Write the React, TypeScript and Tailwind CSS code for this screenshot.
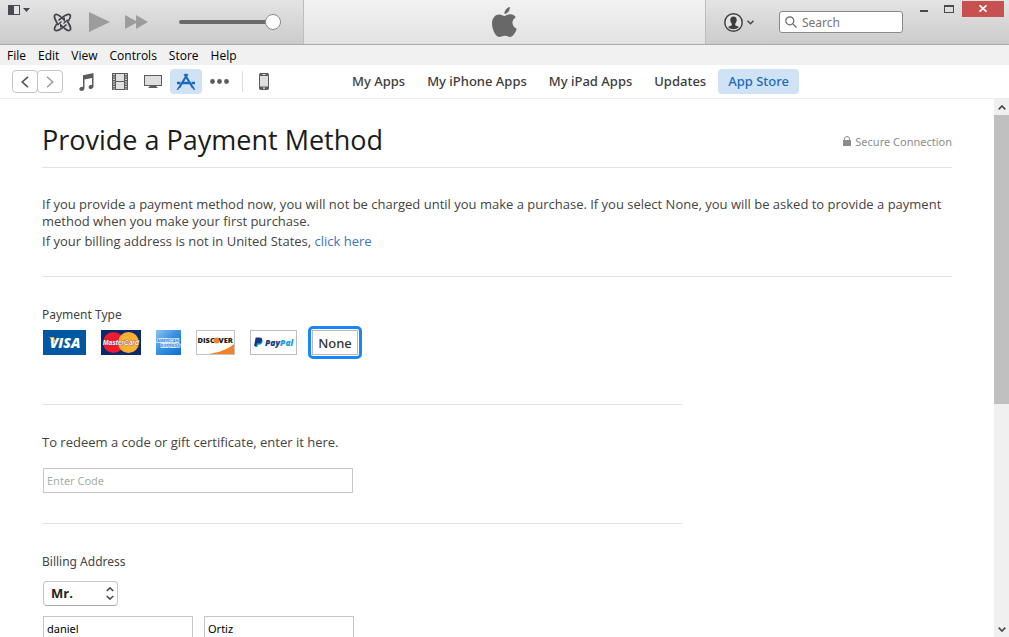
import { useState } from 'react';
import type { ReactNode } from 'react';

const MENU = ['File', 'Edit', 'View', 'Controls', 'Store', 'Help'];
const TABS = ['My Apps', 'My iPhone Apps', 'My iPad Apps', 'Updates', 'App Store'];

interface PaymentOption {
  id: string;
  name: string;
  logo: ReactNode;
}

const VisaLogo = () => (
  <svg width="43" height="25" viewBox="0 0 43 25">
    <rect width="43" height="25" fill="#0157a2" />
    <path d="M6 7h5l2 6z" fill="#f9a533" />
    <text x="22" y="18" textAnchor="middle" fontFamily="Open Sans, sans-serif" fontSize="14" fontWeight="800" fontStyle="italic" fill="#fff">VISA</text>
  </svg>
);

const MasterCardLogo = () => (
  <svg width="40" height="25" viewBox="0 0 40 25">
    <rect width="40" height="25" fill="#0a2a6e" />
    <circle cx="12.500" cy="12.500" r="10.500" fill="#ec1c2e" />
    <circle cx="27.500" cy="12.500" r="10.500" fill="#fbb034" />
    <text x="20" y="15" textAnchor="middle" fontFamily="Liberation Sans, sans-serif" fontSize="6.500" fontWeight="700" fontStyle="italic" fill="#fff" stroke="#7a2a3a" strokeWidth="0.600" paintOrder="stroke">MasterCard</text>
  </svg>
);

const AmexLogo = () => (
  <svg width="25" height="25" viewBox="0 0 25 25">
    <defs>
      <linearGradient id="amex" x1="0" y1="0" x2="1" y2="1">
        <stop offset="0" stopColor="#8cc4f3" />
        <stop offset="0.450" stopColor="#3b93e0" />
        <stop offset="1" stopColor="#0a70cf" />
      </linearGradient>
    </defs>
    <rect width="25" height="25" fill="url(#amex)" />
    <g fontFamily="Liberation Sans, sans-serif" fontSize="4" fontWeight="700" fill="#1f7fd4" stroke="#e8f3fd" strokeWidth="1.400" paintOrder="stroke">
      <text x="1" y="12">AMERICAN</text>
      <text x="5" y="17">EXPRESS</text>
    </g>
  </svg>
);

const DiscoverLogo = () => (
  <svg width="39" height="25" viewBox="0 0 39 25">
    <rect x="0.500" y="0.500" width="38" height="24" fill="#fff" stroke="#c4c4c4" />
    <path d="M38 14v10H13c10-1.500 18-4.500 25-10z" fill="#f58025" />
    <text x="1.500" y="13" fontFamily="Open Sans, sans-serif" fontSize="7.500" fontWeight="800" fill="#231f20">DISC</text>
    <circle cx="20.500" cy="10.500" r="3" fill="#f58025" />
    <text x="22.500" y="13" fontFamily="Open Sans, sans-serif" fontSize="7.500" fontWeight="800" fill="#231f20">VER</text>
  </svg>
);

const PayPalLogo = () => (
  <svg width="47" height="25" viewBox="0 0 47 25">
    <rect x="0.500" y="0.500" width="46" height="24" fill="#fff" stroke="#bdbdbd" />
    <path d="M7 9h3.500c2 0 2.500 1.300 2 3-.5 2-1.800 2.700-3.500 2.700H7.800L7.300 17H5z" fill="#009cde" />
    <path d="M5.700 7.500h4c2 0 2.700 1.300 2.200 3-.5 2-1.900 2.800-3.700 2.800H6.900L6.300 16H4z" fill="#153a80" />
    <text x="15" y="16" fontFamily="Open Sans, sans-serif" fontSize="8.500" fontWeight="800" fontStyle="italic" fill="#153a80">
      Pay<tspan fill="#1a9be0">Pal</tspan>
    </text>
  </svg>
);

const PAYMENT_OPTIONS: PaymentOption[] = [
  { id: 'visa', name: 'Visa', logo: <VisaLogo /> },
  { id: 'mastercard', name: 'MasterCard', logo: <MasterCardLogo /> },
  { id: 'amex', name: 'American Express', logo: <AmexLogo /> },
  { id: 'discover', name: 'Discover', logo: <DiscoverLogo /> },
  { id: 'paypal', name: 'PayPal', logo: <PayPalLogo /> },
  {
    id: 'none',
    name: 'None',
    logo: (
      <span className="flex h-[25px] w-[46px] items-center justify-center border border-[#b9b9b9] bg-white pt-px text-[13px] font-medium text-[#333]">
        None
      </span>
    ),
  },
];

function PlayerBar() {
  const [volume, setVolume] = useState(100);

  return (
    <header className="flex h-[45px] shrink-0 border-b border-[#a9a9a9] bg-gradient-to-b from-[#e4e4e4] to-[#cbcbcb]">
      <div className="flex w-[304px] shrink-0 border-r border-[#bdbdbd] pl-2">
        <button aria-label="Window menu" className="flex h-5 items-center gap-[3px]">
          <svg width="12" height="10" viewBox="0 0 12 10">
            <rect x="0.500" y="0.500" width="11" height="9" fill="#e4e4e4" stroke="#4a4852" />
            <rect width="6" height="10" fill="#4a4852" />
          </svg>
          <svg width="7" height="4" viewBox="0 0 7 4"><path d="M0 0h7L3.500 4z" fill="#4a4852" /></svg>
        </button>
        <div className="flex flex-1 items-center pl-[23px]">
          <button aria-label="Genius">
            <svg width="19" height="19" viewBox="0 0 19 19" fill="none" stroke="#45434d" strokeWidth="1.700">
              <path d="M5.500 12C2.500 8 .8 3.500 1.800 2 3 .8 6 2.300 8 4" />
              <path d="M13.500 7c3 4 4.700 8.500 3.700 10-1.200 1.200-4.200-.3-6.200-2" />
              <path d="M5.500 7.500C9.500 3.300 15.500.3 17 1.800c1.200 1.300-.2 4-1.700 6.200" />
              <path d="M13.500 11.500c-4 4.200-10 7.200-11.500 5.700-1.200-1.300.2-4 1.700-6.200" />
              <path d="M8.500 8.500L4.500 12M10.500 10.500L14.500 7" strokeWidth="1.200" />
              <path d="M7.500 4.500h4.500V9zM7 10v4.500h4.500z" fill="#45434d" stroke="none" />
            </svg>
          </button>
          <button aria-label="Play" className="ml-[17px]">
            <svg width="21" height="20" viewBox="0 0 21 20"><path d="M0 0l21 10L0 20z" fill="#9c9c9c" /></svg>
          </button>
          <button aria-label="Next track" className="ml-[15px]">
            <svg width="23" height="14" viewBox="0 0 23 14"><path d="M0 0l11 6V0l12 7-12 7V8L0 14z" fill="#9c9c9c" /></svg>
          </button>
          <input
            type="range"
            aria-label="Volume"
            value={volume}
            onChange={(e) => setVolume(Number(e.target.value))}
            className="ml-[31px] h-4 w-[102px] appearance-none bg-transparent [&::-webkit-slider-runnable-track]:h-1 [&::-webkit-slider-runnable-track]:rounded-full [&::-webkit-slider-runnable-track]:bg-[#6a6a6a] [&::-webkit-slider-thumb]:-mt-[6px] [&::-webkit-slider-thumb]:size-4 [&::-webkit-slider-thumb]:appearance-none [&::-webkit-slider-thumb]:rounded-full [&::-webkit-slider-thumb]:border [&::-webkit-slider-thumb]:border-[#8c8c8c] [&::-webkit-slider-thumb]:bg-white"
          />
        </div>
      </div>

      <div className="flex flex-1 items-center justify-center bg-gradient-to-b from-[#f2f2f2] to-[#e2e2e2]">
        <svg width="25" height="31" viewBox="0 0 25 31" fill="#686868">
          <path d="M17.800 0c.5 2.500-1.600 6.700-5.300 6.900C12 4 14.700.500 17.800 0z" />
          <path d="M12.600 8.900c1.400 0 3.100-1.600 5.800-1.600 2.200 0 4.200 1.200 5.400 3-5 3-4.100 9.600 1 11.500-1.100 3.200-3.800 8.200-6.700 8.200-2 0-2.900-1.200-5.200-1.200s-3.300 1.200-5.200 1.200C3.900 30 0 22.800 0 16.400 0 10.800 3.400 7.400 7.200 7.400c2.300 0 3.900 1.500 5.400 1.500z" />
        </svg>
      </div>

      <div className="flex w-[304px] shrink-0 border-l border-[#bdbdbd]">
        <div className="flex flex-1 items-center pl-[18px]">
          <button aria-label="Account" className="flex items-center gap-1">
            <svg width="19" height="19" viewBox="0 0 19 19">
              <circle cx="9.500" cy="9.500" r="8.700" fill="#e4e4e4" stroke="#3c3c3c" strokeWidth="1.400" />
              <path d="M9.500 3.500c2.200 0 3.300 1.500 3.200 3.500-.1 1.700-.8 3-1.500 3.800v1.400l3.900 1.800A8 8 0 0 1 3.900 14l3.900-1.800v-1.400C7 10 6.400 8.700 6.300 7c-.1-2 1-3.500 3.200-3.500z" fill="#3c3c3c" />
            </svg>
            <svg width="7" height="5" viewBox="0 0 7 5" fill="none" stroke="#4a4a4a" strokeWidth="1.600"><path d="M.5.700l3 3 3-3" /></svg>
          </button>
          <label className="ml-[25px] flex h-[22px] w-[124px] items-center gap-[5px] rounded-[3px] border border-[#8a8a8a] bg-white pl-[5px]">
            <svg width="12" height="12" viewBox="0 0 12 12" fill="none" stroke="#6a6a6a" strokeWidth="1.200" className="shrink-0">
              <circle cx="4.800" cy="4.800" r="4" />
              <path d="M7.800 7.800l3.700 3.700" />
            </svg>
            <input
              type="text"
              aria-label="Search"
              placeholder="Search"
              className="w-full min-w-0 text-[12px] outline-none placeholder:text-[#767676]"
            />
          </label>
        </div>
        <div className="flex h-4 items-center pr-[5px] pt-px">
          <button aria-label="Minimize" className="mr-4 mt-1 h-[2px] w-2 bg-[#4a4a4a]" />
          <button aria-label="Maximize" className="mr-2 h-2 w-[10px] border border-t-2 border-[#4a4a4a]" />
          <button aria-label="Close" className="flex h-4 w-[42px] items-center justify-center bg-[#c75050]">
            <svg width="8" height="7" viewBox="0 0 8 7" stroke="#fff" strokeWidth="1.700"><path d="M.5.300l7 6.400M7.500.300l-7 6.400" /></svg>
          </button>
        </div>
      </div>
    </header>
  );
}

function Toolbar() {
  const [tab, setTab] = useState('App Store');

  return (
    <div className="flex h-[34px] shrink-0 items-center border-b border-[#ebebeb] bg-white pl-3">
      <div className="flex w-[330px] shrink-0 items-center">
        <button aria-label="Back" className="flex h-[23px] w-[26px] items-center justify-center rounded-[4px] border border-[#c6c6c6]">
          <svg width="8" height="12" viewBox="0 0 8 12" fill="none" stroke="#555" strokeWidth="1.600"><path d="M7 .800L1.200 6 7 11.200" /></svg>
        </button>
        <button aria-label="Forward" className="-ml-px flex h-[23px] w-[26px] items-center justify-center rounded-[4px] border border-[#c6c6c6]">
          <svg width="8" height="12" viewBox="0 0 8 12" fill="none" stroke="#999" strokeWidth="1.400"><path d="M1 .800L6.800 6 1 11.200" /></svg>
        </button>
        <button aria-label="Music" className="ml-4">
          <svg width="15" height="18" viewBox="0 0 15 18" fill="#5c5c5c">
            <path d="M4 2.200L14.500 0v13.500c0 1.500-1.300 2.500-2.800 2.500-2.700 0-2.700-3.500-.2-4l1.500-.3V5L5.500 6.500V15c0 1.800-1.300 3-2.900 3C-.4 18-.4 14.500 2.300 14l1.700-.3z" />
          </svg>
        </button>
        <button aria-label="Movies" className="ml-[18px]">
          <svg width="16" height="17" viewBox="0 0 16 17">
            <rect width="16" height="17" fill="#5c5c5c" />
            <path d="M4 1h8v7H4zM4 9h8v7H4z" fill="#e0e0e0" />
            <path d="M2 1v16M14 1v16" stroke="#e8e8e8" strokeWidth="1.500" strokeDasharray="1.200 1.200" />
          </svg>
        </button>
        <button aria-label="TV Shows" className="ml-4">
          <svg width="18" height="13" viewBox="0 0 18 13">
            <rect x="0.500" y="0.500" width="17" height="10" fill="#dedede" stroke="#5c5c5c" />
            <path d="M6 11h6l2 2H4z" fill="#5c5c5c" />
          </svg>
        </button>
        <button aria-label="Apps" className="ml-2 flex h-[25px] w-8 items-center justify-center rounded-[4px] bg-[#d0e2f6]">
          <svg width="20" height="18" viewBox="0 0 20 18" fill="none" stroke="#1b6cb8">
            <path d="M8.500 1l8.500 14M11.500 1L3 15" strokeWidth="2.200" />
            <path d="M1 10h3.500M7 10h6.500M15.500 10H19" strokeWidth="2.600" />
            <path d="M3 14l-1.700 3M17 14l1.500 3" strokeWidth="1.500" />
          </svg>
        </button>
        <button aria-label="More" className="ml-2">
          <svg width="19" height="5" viewBox="0 0 19 5" fill="#5c5c5c">
            <circle cx="2.500" cy="2.500" r="2.400" />
            <circle cx="9.500" cy="2.500" r="2.400" />
            <circle cx="16.500" cy="2.500" r="2.400" />
          </svg>
        </button>
        <span className="ml-[13px] h-[21px] w-px bg-[#dcdcdc]" />
        <button aria-label="iPhone" className="ml-4">
          <svg width="10" height="17" viewBox="0 0 10 17">
            <rect width="10" height="17" rx="1.800" fill="#5c5c5c" />
            <rect x="1" y="3" width="8" height="10.500" fill="#dedede" />
            <path d="M3.500 1.500h3" stroke="#dedede" />
            <circle cx="5" cy="15.200" r="0.900" fill="#dedede" />
          </svg>
        </button>
      </div>
      <nav className="flex gap-[2px]">
        {TABS.map((name) => (
          <button
            key={name}
            onClick={() => setTab(name)}
            className={`h-[25px] whitespace-nowrap rounded-[4px] px-[10px] text-[13px] font-medium ${
              tab === name ? 'bg-[#d0e2f6] text-[#1b6cb8]' : 'text-[#3c3c3c]'
            }`}
          >
            {name}
          </button>
        ))}
      </nav>
    </div>
  );
}

function Scrollbar() {
  return (
    <div className="flex w-[15px] shrink-0 flex-col bg-[#f0f0f0]">
      <button aria-label="Scroll up" className="flex h-4 shrink-0 items-center justify-center">
        <svg width="8" height="5" viewBox="0 0 8 5" fill="none" stroke="#4a4a4a" strokeWidth="1.700"><path d="M.7 4.300L4 1l3.300 3.300" /></svg>
      </button>
      <div className="flex-1">
        <div className="h-4/7 bg-[#c0c0c0]" />
      </div>
      <button aria-label="Scroll down" className="flex h-4 shrink-0 items-center justify-center">
        <svg width="8" height="5" viewBox="0 0 8 5" fill="none" stroke="#4a4a4a" strokeWidth="1.700"><path d="M.7.700L4 4 7.300.700" /></svg>
      </button>
    </div>
  );
}

export default function App() {
  const [payment, setPayment] = useState('none');

  return (
    <div className="flex h-screen flex-col overflow-hidden bg-white font-['Noto_Sans',sans-serif] text-[12px] leading-[17px] text-[#444]">
      <PlayerBar />

      <nav className="flex h-5 shrink-0 items-center gap-3 bg-[#f1f1f1] pl-[7px] font-['Open_Sans',sans-serif] text-black">
        {MENU.map((item) => (
          <button key={item}>{item}</button>
        ))}
      </nav>

      <Toolbar />

      <div className="flex min-h-0 flex-1">
        <main className="min-w-0 flex-1 overflow-hidden px-[42px] pt-6">
          <div className="flex items-center justify-between border-b border-[#e3e3e3] pb-2">
            <h1 className="pb-[2px] font-['Open_Sans',sans-serif] text-[27px] leading-[34px] text-[#1c1c1c]">Provide a Payment Method</h1>
            <div className="flex items-center gap-1 text-[11px] text-[#8c8c8c]">
              <svg width="8" height="10" viewBox="0 0 8 10">
                <rect y="4" width="8" height="6" fill="#8c8c8c" />
                <path d="M1.500 4.500V3a2.500 2.500 0 0 1 5 0v1.500" fill="none" stroke="#8c8c8c" />
              </svg>
              Secure Connection
            </div>
          </div>

          <section className="border-b border-[#e3e3e3] pb-[26px] pt-7 font-['Open_Sans',sans-serif] text-[13px]">
            <p>
              If you provide a payment method now, you will not be charged until you make a purchase. If you select None, you will be asked to provide a payment method when you make your first purchase.
            </p>
            <p className="mt-[3px]">
              If your billing address is not in United States, <a href="#" className="text-[#3f73b8]">click here</a>
            </p>
          </section>

          <fieldset className="max-w-[640px] border-b border-[#e3e3e3] pb-[49px]">
            <legend className="pt-[29px]">Payment Type</legend>
            <div className="mt-[7px] flex gap-[15px] pl-px">
              {PAYMENT_OPTIONS.map((option) => (
                <label
                  key={option.id}
                  className={`relative ${payment === option.id ? 'rounded-[1px] outline-[3px] outline-offset-1 outline-[#1a86fc]' : ''}`}
                >
                  <input
                    type="radio"
                    name="payment"
                    aria-label={option.name}
                    checked={payment === option.id}
                    onChange={() => setPayment(option.id)}
                    className="sr-only"
                  />
                  {option.logo}
                </label>
              ))}
            </div>
          </fieldset>

          <section className="max-w-[640px] border-b border-[#e3e3e3] pb-[30px] pt-[29px]">
            <label htmlFor="code" className="block font-['Open_Sans',sans-serif] text-[13px]">To redeem a code or gift certificate, enter it here.</label>
            <input
              id="code"
              type="text"
              placeholder="Enter Code"
              className="ml-px mt-[17px] block h-[25px] w-[310px] border border-[#c6c6c6] px-[3px] text-[11px] outline-none placeholder:text-[#a3b0a3]"
            />
          </section>

          <section className="pt-[29px]">
            <h2>Billing Address</h2>
            <div className="relative ml-px mt-[11px] w-[75px]">
              <select
                aria-label="Title"
                className="block h-[25px] w-full appearance-none rounded-[4px] border border-[#c6c6c6] border-b-[#a9a9a9] bg-white px-[7px] font-['Open_Sans',sans-serif] text-[13px] font-bold text-[#222]"
              >
                <option>Mr.</option>
                <option>Mrs.</option>
                <option>Ms.</option>
              </select>
              <svg width="8" height="13" viewBox="0 0 8 13" fill="none" stroke="#444" strokeWidth="1.500" className="pointer-events-none absolute right-1 top-[6px]">
                <path d="M.7 4L4 .900 7.300 4M.7 9L4 12.100 7.300 9" />
              </svg>
            </div>
            <div className="ml-px mt-[10px] flex gap-[11px] text-[11px] text-black">
              <input type="text" aria-label="First name" defaultValue="daniel" className="h-[25px] w-[150px] border border-[#c6c6c6] px-[3px] outline-none" />
              <input type="text" aria-label="Last name" defaultValue="Ortiz" className="h-[25px] w-[150px] border border-[#c6c6c6] px-[3px] outline-none" />
            </div>
          </section>
        </main>
        <Scrollbar />
      </div>
    </div>
  );
}
